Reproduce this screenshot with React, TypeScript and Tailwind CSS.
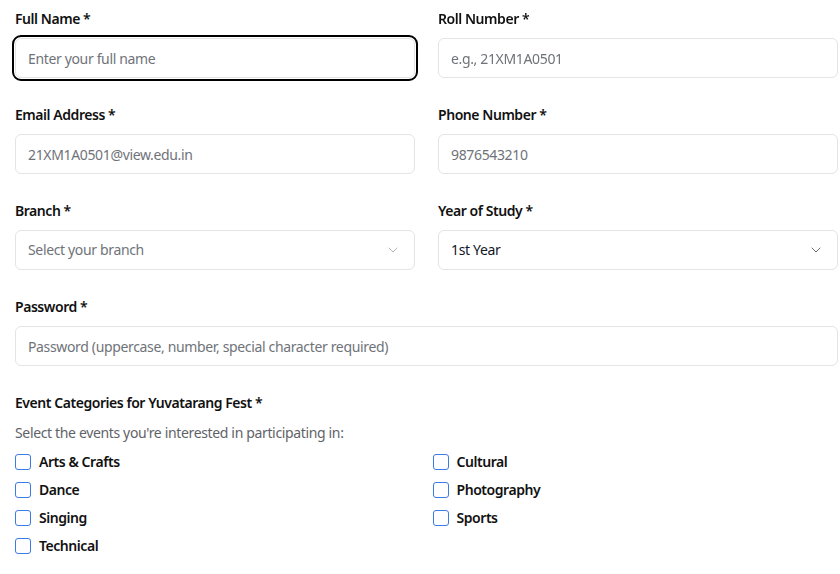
import { ChevronDown } from 'lucide-react';

const font = { fontFamily: '"Noto Sans", "Open Sans", Arial, sans-serif' };

const inputCls =
  'h-10 w-full rounded-md border border-[#e2e4e8] bg-white px-3 text-sm text-[#111827] placeholder:text-[#6f7379] outline-none';

function Field({ label, children }: { label: string; children: React.ReactNode }) {
  return (
    <div className="flex flex-col">
      <label className="mb-[7px] block h-6 text-sm leading-6 font-semibold tracking-[-0.45px] text-[#111]">{label}</label>
      {children}
    </div>
  );
}

function SelectBox({ value, placeholder }: { value?: string; placeholder: boolean }) {
  return (
    <div className="flex h-10 w-full items-center justify-between rounded-md border border-[#e2e4e8] bg-white pr-[13px] pl-3 text-sm">
      <span className={placeholder ? 'text-[#6f7379]' : 'text-[#111827]'}>{value}</span>
      <ChevronDown size={16} strokeWidth={1.5} className={placeholder ? 'text-[#b4b6ba]' : 'text-[#6b6e73]'} />
    </div>
  );
}

const events = ['Arts & Crafts', 'Cultural', 'Dance', 'Photography', 'Singing', 'Sports', 'Technical'];

export default function App() {
  return (
    <main className="min-h-[574px] bg-white pt-[7px] pr-[2px] pl-[15px] tracking-[-0.35px]" style={font}>
      <div className="grid grid-cols-2 gap-x-[23px] gap-y-[25px]">
        <Field label="Full Name *">
          <input
            autoFocus
            placeholder="Enter your full name"
            className={inputCls + ' outline-2 outline-offset-1 outline-black outline-solid'}
          />
        </Field>
        <Field label="Roll Number *">
          <input placeholder="e.g., 21XM1A0501" className={inputCls} />
        </Field>
        <Field label="Email Address *">
          <input placeholder="21XM1A0501@view.edu.in" className={inputCls} />
        </Field>
        <Field label="Phone Number *">
          <input placeholder="9876543210" className={inputCls} />
        </Field>
        <Field label="Branch *">
          <SelectBox value="Select your branch" placeholder />
        </Field>
        <Field label="Year of Study *">
          <SelectBox value="1st Year" placeholder={false} />
        </Field>
        <div className="col-span-2">
          <Field label="Password *">
            <input placeholder="Password (uppercase, number, special character required)" className={inputCls} />
          </Field>
        </div>
        <div className="col-span-2">
          <label className="mb-2 block h-6 text-sm leading-6 font-semibold tracking-[-0.45px] text-[#111]">
            Event Categories for Yuvatarang Fest *
          </label>
          <p className="mb-[9px] text-sm leading-5 text-[#5f6368]">Select the events you're interested in participating in:</p>
          <div className="grid grid-cols-2 gap-x-3 gap-y-2">
            {events.map((e) => (
              <label key={e} className="flex h-5 items-center gap-2 text-sm font-semibold tracking-[-0.45px] text-[#111]">
                <span className="h-4 w-4 shrink-0 rounded-[3px] border-[1.5px] border-[#3b7be8] bg-white" />
                {e}
              </label>
            ))}
          </div>
        </div>
      </div>
    </main>
  );
}
